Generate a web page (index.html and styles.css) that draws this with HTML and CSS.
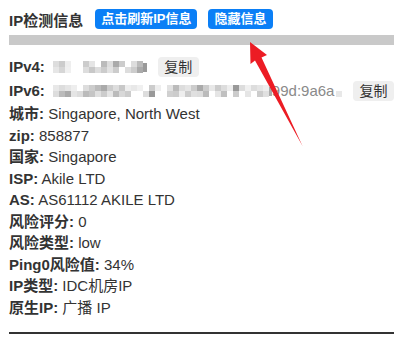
FILE: index.html
```html
<!DOCTYPE html>
<html lang="zh">

<head>
    <meta charset="UTF-8">
    <meta name="viewport" content="width=device-width, initial-scale=1.0">
    <title>IP检测信息</title>
    <link rel="stylesheet" href="styles.css">
</head>

<body>
    <div class="page">
        <div class="head">
            <span class="title">IP检测信息</span>
            <button class="blue-btn">点击刷新IP信息</button>
            <button class="blue-btn second">隐藏信息</button>
        </div>
        <div class="bar"></div>

        <div class="row btn-row">
            <b>IPv4:</b>
            <svg class="blur" width="100" height="12" viewBox="0 0 100 12">
                <rect x="4" y="0" width="6" height="6" fill="#ddd"/>
                <rect x="10" y="0" width="6" height="6" fill="#ccc"/>
                <rect x="16" y="0" width="6" height="6" fill="#eee"/>
                <rect x="4" y="6" width="6" height="6" fill="#e6e6e6"/>
                <rect x="10" y="6" width="6" height="6" fill="#d6d6d6"/>
                <rect x="16" y="6" width="6" height="6" fill="#f0f0f0"/>
                <rect x="34" y="0" width="6" height="6" fill="#ccc"/>
                <rect x="40" y="0" width="6" height="6" fill="#e5e5e5"/>
                <rect x="34" y="6" width="6" height="6" fill="#ddd"/>
                <rect x="40" y="6" width="6" height="6" fill="#c8c8c8"/>
                <rect x="46" y="6" width="6" height="6" fill="#ddd"/>
                <rect x="52" y="0" width="6" height="6" fill="#bbb"/>
                <rect x="58" y="0" width="6" height="6" fill="#ddd"/>
                <rect x="52" y="6" width="6" height="6" fill="#ccc"/>
                <rect x="58" y="6" width="6" height="6" fill="#e2e2e2"/>
                <rect x="64" y="0" width="6" height="6" fill="#aaa"/>
                <rect x="70" y="0" width="6" height="6" fill="#ccc"/>
                <rect x="64" y="6" width="6" height="6" fill="#ccc"/>
                <rect x="76" y="6" width="6" height="6" fill="#ddd"/>
                <rect x="82" y="0" width="6" height="6" fill="#ddd"/>
                <rect x="88" y="0" width="6" height="6" fill="#bbb"/>
                <rect x="82" y="6" width="6" height="6" fill="#ccc"/>
                <rect x="88" y="6" width="6" height="6" fill="#aaa"/>
                <rect x="94" y="2" width="4" height="9" fill="#999"/>
            </svg>
            <button class="copy v4">复制</button>
        </div>

        <div class="row btn-row">
            <b>IPv6:</b>
            <svg class="blur" width="223" height="12" viewBox="0 0 223 12">
                <rect x="4" y="0" width="6" height="6" fill="#e8e8e8"/>
                <rect x="10" y="0" width="6" height="6" fill="#ddd"/>
                <rect x="4" y="6" width="6" height="6" fill="#ddd"/>
                <rect x="10" y="6" width="6" height="6" fill="#bbb"/>
                <rect x="16" y="0" width="6" height="6" fill="#e5e5e5"/>
                <rect x="16" y="6" width="6" height="6" fill="#aaa"/>
                <rect x="22" y="0" width="6" height="6" fill="#eee"/>
                <rect x="22" y="6" width="6" height="6" fill="#e5e5e5"/>
                <rect x="28" y="6" width="6" height="6" fill="#ddd"/>
                <rect x="34" y="0" width="6" height="6" fill="#ddd"/>
                <rect x="34" y="6" width="6" height="6" fill="#bbb"/>
                <rect x="40" y="0" width="6" height="6" fill="#ccc"/>
                <rect x="40" y="6" width="6" height="6" fill="#c5c5c5"/>
                <rect x="46" y="0" width="6" height="6" fill="#bbb"/>
                <rect x="46" y="6" width="6" height="6" fill="#e0e0e0"/>
                <rect x="52" y="0" width="6" height="6" fill="#aaa"/>
                <rect x="52" y="6" width="6" height="6" fill="#ccc"/>
                <rect x="58" y="0" width="6" height="6" fill="#ccc"/>
                <rect x="58" y="6" width="6" height="6" fill="#e5e5e5"/>
                <rect x="64" y="0" width="6" height="6" fill="#ddd"/>
                <rect x="64" y="6" width="6" height="6" fill="#bbb"/>
                <rect x="70" y="0" width="6" height="6" fill="#c8c8c8"/>
                <rect x="70" y="6" width="6" height="6" fill="#d8d8d8"/>
                <rect x="76" y="0" width="6" height="6" fill="#eee"/>
                <rect x="76" y="6" width="6" height="6" fill="#ccc"/>
                <rect x="82" y="0" width="6" height="6" fill="#e8e8e8"/>
                <rect x="88" y="0" width="6" height="6" fill="#f0f0f0"/>
                <rect x="94" y="6" width="6" height="6" fill="#ddd"/>
                <rect x="100" y="0" width="6" height="6" fill="#ccc"/>
                <rect x="100" y="6" width="6" height="6" fill="#999"/>
                <rect x="106" y="0" width="6" height="6" fill="#eee"/>
                <rect x="118" y="0" width="6" height="6" fill="#e2e2e2"/>
                <rect x="118" y="6" width="6" height="6" fill="#d0d0d0"/>
                <rect x="124" y="0" width="6" height="6" fill="#bbb"/>
                <rect x="124" y="6" width="6" height="6" fill="#ccc"/>
                <rect x="130" y="0" width="6" height="6" fill="#ddd"/>
                <rect x="130" y="6" width="6" height="6" fill="#eee"/>
                <rect x="136" y="0" width="6" height="6" fill="#e5e5e5"/>
                <rect x="136" y="6" width="6" height="6" fill="#ccc"/>
                <rect x="142" y="0" width="6" height="6" fill="#ccc"/>
                <rect x="142" y="6" width="6" height="6" fill="#e0e0e0"/>
                <rect x="148" y="0" width="6" height="6" fill="#aaa"/>
                <rect x="148" y="6" width="6" height="6" fill="#ddd"/>
                <rect x="154" y="0" width="6" height="6" fill="#ccc"/>
                <rect x="154" y="6" width="6" height="6" fill="#bbb"/>
                <rect x="160" y="0" width="6" height="6" fill="#e8e8e8"/>
                <rect x="166" y="0" width="6" height="6" fill="#ccc"/>
                <rect x="166" y="6" width="6" height="6" fill="#e5e5e5"/>
                <rect x="172" y="0" width="6" height="6" fill="#ddd"/>
                <rect x="172" y="6" width="6" height="6" fill="#c0c0c0"/>
                <rect x="178" y="0" width="6" height="6" fill="#eee"/>
                <rect x="184" y="0" width="6" height="6" fill="#999"/>
                <rect x="184" y="6" width="6" height="6" fill="#ccc"/>
                <rect x="190" y="0" width="6" height="6" fill="#ddd"/>
                <rect x="196" y="0" width="6" height="6" fill="#f0f0f0"/>
                <rect x="196" y="6" width="6" height="6" fill="#e5e5e5"/>
                <rect x="202" y="0" width="6" height="6" fill="#ddd"/>
                <rect x="208" y="0" width="6" height="6" fill="#e5e5e5"/>
                <rect x="208" y="6" width="6" height="6" fill="#ccc"/>
                <rect x="214" y="0" width="6" height="6" fill="#eee"/>
                <rect x="214" y="6" width="6" height="6" fill="#e0e0e0"/>
                <rect x="220" y="2" width="3" height="9" fill="#aaa"/>
            </svg><span class="faded">99d:9a6a</span>
            <svg class="blur-tail" width="8" height="12" viewBox="0 0 8 12">
                <rect x="0" y="6" width="6" height="6" fill="#e8e8e8"/>
            </svg>
            <button class="copy v6">复制</button>
        </div>

        <div class="row"><b>城市:</b> Singapore, North West</div>
        <div class="row"><b>zip:</b> 858877</div>
        <div class="row"><b>国家:</b> Singapore</div>
        <div class="row"><b>ISP:</b> Akile LTD</div>
        <div class="row"><b>AS:</b> AS61112 AKILE LTD</div>
        <div class="row"><b>风险评分:</b> 0</div>
        <div class="row"><b>风险类型:</b> low</div>
        <div class="row"><b>Ping0风险值:</b> 34%</div>
        <div class="row"><b>IP类型:</b> IDC机房IP</div>
        <div class="row"><b>原生IP:</b> 广播 IP</div>

        <div class="end-line"></div>
    </div>

    <!-- 标注箭头 -->
    <svg class="arrow" width="400" height="360" viewBox="0 0 400 360">
        <polygon points="250,42 267,55 261.5,57.5 302.5,146 255,60.5 250.5,64" fill="#ec1c24"/>
    </svg>
</body>

</html>
```

FILE: styles.css
```css
body {
    margin: 0;
    position: relative;
    font-family: "Liberation Sans", Arial, "Noto Sans CJK SC", sans-serif;
    font-size: 15px;
    color: #333;
    background: #fff;
}

.page {
    padding: 9px 0 0 9px;
    width: 385px;
}

.head {
    display: flex;
    align-items: center;
    height: 20px;
}

.title {
    font-weight: bold;
    font-size: 15px;
    color: #333;
    margin-right: 12px;
}

.blue-btn {
    height: 20px;
    padding: 0 6px;
    border: none;
    border-radius: 4px;
    background: #0b7ff6;
    color: #fff;
    font-family: inherit;
    font-size: 13px;
    font-weight: bold;
    line-height: 20px;
}

.second {
    margin-left: 11px;
}

.bar {
    margin-top: 6px;
    height: 10px;
    background: #c9c9c9;
    margin-bottom: 10px;
}

.row {
    line-height: 21.5px;
    white-space: nowrap;
}

.btn-row {
    display: flex;
    align-items: center;
    height: 24px;
}

.blur {
    margin-left: 4px;
    display: block;
}

.blur-tail {
    display: block;
    margin-left: 2px;
}

.faded {
    color: #8a8a8a;
}

.copy {
    height: 20px;
    padding: 0 6.5px;
    border: none;
    border-radius: 4px;
    background: #efefef;
    color: #333;
    font-family: inherit;
    font-size: 14px;
    line-height: 20px;
}

.v4 {
    margin-left: 9px;
}

.v6 {
    margin-left: auto;
}

.end-line {
    margin-top: 14px;
    border-top: 2px solid #333;
}

.arrow {
    position: absolute;
    left: 0;
    top: 0;
    pointer-events: none;
}
```
